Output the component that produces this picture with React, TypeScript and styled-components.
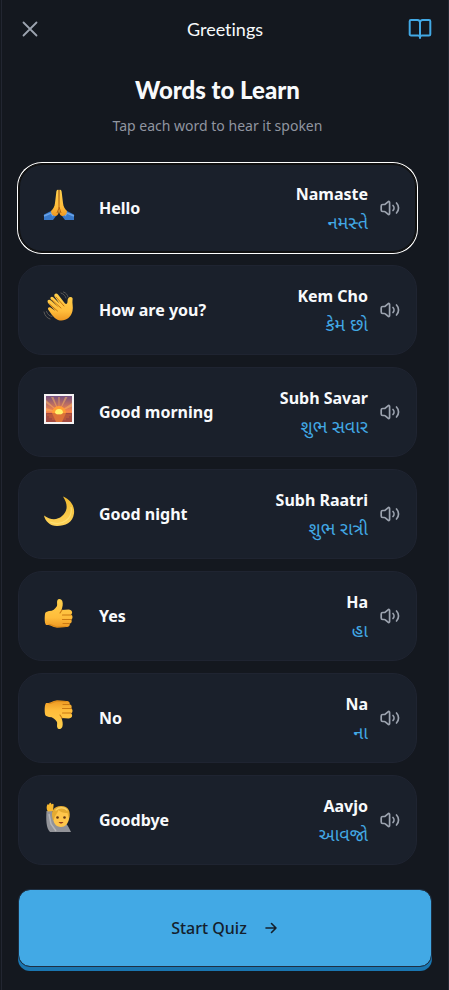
import React from "react";
import styled, { createGlobalStyle, css } from "styled-components";

const GlobalStyle = createGlobalStyle`
  *, *::before, *::after { box-sizing: border-box; }
  body { margin: 0; background: #14181f; }
  button { font: inherit; color: inherit; cursor: pointer; }
`;

const Screen = styled.div`
  min-height: 100vh;
  display: flex;
  flex-direction: column;
  margin-left: 1px;
  border: solid #222631;
  border-width: 0 1px;
  background: #14181f;
  color: #f8fafc;
  font-family: "Noto Sans", "Open Sans", "Noto Sans Gujarati", sans-serif;
`;

const Header = styled.header`
  display: flex;
  align-items: center;
  justify-content: space-between;
  height: 58px;
  padding: 0 16px;
`;

const IconButton = styled.button<{ $accent?: boolean }>`
  display: grid;
  place-items: center;
  width: 24px;
  height: 24px;
  padding: 0;
  border: 0;
  background: none;
  color: ${(p) => (p.$accent ? "#42a9e5" : "#9ca3af")};
`;

const Title = styled.h1`
  margin: 0;
  font: 400 18px/28px Lato, sans-serif;
  font-variant-ligatures: none;
`;

const Content = styled.main`
  flex: 1;
  padding: 16px 31px 0 16px;
`;

const Heading = styled.h2`
  margin: 0;
  text-align: center;
  font: 900 24px/32px Lato, sans-serif;
`;

const Subtitle = styled.p`
  margin: 8px 0 25px;
  text-align: center;
  font-size: 14px;
  line-height: 24px;
  color: #9095a0;
`;

const WordList = styled.ul`
  display: flex;
  flex-direction: column;
  gap: 12px;
  margin: 0;
  padding: 0;
  list-style: none;
`;

const WordCard = styled.button<{ $active?: boolean }>`
  display: flex;
  align-items: center;
  width: 100%;
  padding: 16px;
  border: 1px solid #1f2431;
  border-radius: 24px;
  background: #1a202b;
  text-align: left;
  outline: none;
  ${(p) =>
    p.$active &&
    css`
      border-color: #101010;
      box-shadow: inset 0 0 0 1px #101010, 0 0 0 1px #ffffff;
    `}
`;

const Picture = styled.svg`
  flex: none;
  width: 32px;
  height: 32px;
  margin: 0 24px 6px 8px;
  overflow: visible;
`;

const English = styled.span`
  flex: 1;
  font-size: 16px;
  font-weight: 700;
  line-height: 28px;
`;

const Translation = styled.span`
  display: flex;
  flex-direction: column;
  align-items: flex-end;
  font-size: 16px;
  line-height: 28px;
`;

const Latin = styled.span`
  font-weight: 700;
`;

const Native = styled.span`
  font-size: 18px;
  color: #42a9e5;
`;

const Speaker = styled.svg`
  flex: none;
  width: 20px;
  height: 20px;
  margin-left: 12px;
  color: #9ca3af;
`;

const Footer = styled.footer`
  padding: 24px 16px;
`;

const StartButton = styled.button`
  display: flex;
  align-items: center;
  justify-content: center;
  gap: 16px;
  width: 100%;
  height: 78px;
  border: 1px solid #1e3044;
  border-radius: 12px;
  background: #42a9e5;
  background-clip: padding-box;
  box-shadow: 0 4px 0 #1a76b1;
  color: #14202c;
  font-size: 16px;
  font-weight: 500;
  line-height: 28px;
`;

type EmojiName = "pray" | "wave" | "sunrise" | "moon" | "up" | "down" | "person";

const Thumb = () => (
  <>
    <path d="M2 17c0-2 2-2.500 4-3 4 0 6-2 8-5 .5-2-.5-4 .5-6 1-2 4-1 4.800 1 1 3 .2 6-.8 9l7-.5c4 0 4.500 4 2.500 5 2 1 2 4 .3 5 1 2 .2 4-1.800 4 1 2-1 3.500-3 3.500l-9 .5c-4 0-6-2-9-2.500H3c-1.500-2-1.500-7-1-11z" fill="url(#skin)" />
    <path d="M28 18h-8.500M28 22.500h-8.500M26 26.500h-6M19 13l-2 3" fill="none" stroke="#c97813" strokeWidth="1.1" strokeLinecap="round" />
    <path d="M6 27.500c3 0 5 2 8 2.500l9-.5" fill="none" stroke="#dc8b19" strokeWidth="1.1" strokeLinecap="round" />
  </>
);

const drawings: Record<EmojiName, React.ReactNode> = {
  pray: (
    <>
      <path d="M1 25.500l7-3.500 5 5-3 4H1zM31 25.500L24 22l-5 5 3 4h9z" fill="#3979c9" />
      <path d="M1 27l7-3 2 3M31 27l-7-3-2 3" fill="none" stroke="#6ba3e7" strokeWidth="1.4" />
      <path d="M15.800 1c-2-1-2.500 1-2.600 3L12 14c-.4 4-2 6-4 8 0 3 2 5 5 5 3-1 3-5 3-9z" fill="url(#skin)" />
      <path d="M16.200 1c2-1 2.500 1 2.600 3L20 14c.4 4 2 6 4 8 0 3-2 5-5 5-3-1-3-5-3-9z" fill="url(#skin)" />
      <path d="M16 1v18l-2 5M16 18l2 6" fill="none" stroke="#b66312" strokeWidth="1" />
    </>
  ),
  wave: (
    <>
      <path d="M7.500 8c-.5-2 1.500-3 3-1.500l6 6-5-7c-1-3 2-4 3.500-2l7 9c1.500 1 2.500 0 2.500-2 0-3 1-4.500 3-4.500s2.500 1.500 2 3c-.5 3 1 7 0 11-1.500 7-8 11-14.500 9-2.500-1-4-3-6-5L5.500 19c-1.500-2 .5-3.500 2-2.500l5 3.500-7.500-8c-1.500-3 1-4 3-2.500l7.500 7z" fill="url(#skin)" />
      <path d="M9 9l9 8M6.500 13l8 7M13 6l8 9" fill="none" stroke="#c77510" strokeWidth="1" strokeLinecap="round" />
      <path d="M18 2c3 1 4.500 3 5 5M20.500 1c3 1 4 3 4.500 5M3.500 20.500c1 3 3 4.500 5.500 5M1 21c1 4 3 6 6 7" fill="none" stroke="#5a5856" strokeWidth="1" strokeLinecap="round" />
    </>
  ),
  sunrise: (
    <>
      <path d="M1 1h30v30H1z" fill="#f6f3f3" />
      <path d="M3 3h26v26H3z" fill="url(#sky)" />
      <path d="M16 19L3 7v3zM16 19L8 4h2.500zM16 19l-.8-15h1.600zM16 19l6-15h2.500zM16 19l13-9v3.500zM16 19L3 15v3z" fill="#ffba5b" opacity=".5" />
      <path d="M3 20h26v9H3z" fill="#a54b40" />
      <path d="M9 20h14l-4 9h-6z" fill="#dc7438" />
      <path d="M9 20a7 7 0 0114 0z" fill="#ff9d35" />
      <path d="M12 20a4 4 0 018 0l-2 1.500h-4z" fill="#fff36c" />
      <path d="M4 22h24M6 24h20M9 26h14" stroke="#e17337" strokeWidth=".7" />
    </>
  ),
  moon: (
    <>
      <path d="M20 1.500c7 3 12 9 11 17-1 9-9 12.500-17 12.500C7 31 2 26 1 20.500c6 4.500 13 5 18 .5 6-5 6-12 1-19.500z" fill="url(#gold)" />
      <path d="M28 12c2 11-8 20-21 15" fill="none" stroke="#ffe77e" strokeWidth="1.2" opacity=".7" />
    </>
  ),
  up: <Thumb />,
  down: (
    <g transform="matrix(1 0 0 -1 0 32)">
      <Thumb />
    </g>
  ),
  person: (
    <>
      <path d="M3.500 10h6l2 10c6 2 11 0 14 6l2.500 5H7C3 27 3 18 3.500 10z" fill="#929398" />
      <path d="M6 13l2 10 5 7" fill="none" stroke="#b5b5b8" strokeWidth="1.5" />
      <path d="M5 10.500C3 8 3.500 4 5 3l1 1c.3-3 2-3 2.500-.5C10 2 11 3 10.500 5l-.5 5z" fill="#f7b82f" />
      <path d="M18 6c7 0 9 5 8 12-1 5-4 8-8 8-5 0-8-4-8-10 0-7 3-10 8-10z" fill="#ffc64b" />
      <path d="M10 19C7 10 11 5 18 5c8 0 10 6 8 13l-1.500-6c-5 0-7-1-9-3-1 4-4 5-4.500 10z" fill="#e4aa31" />
      <path d="M13 9c3-3 8-3 11 0" fill="none" stroke="#f8cf63" strokeWidth="1.4" strokeLinecap="round" />
      <circle cx="14.500" cy="16.500" r="1.300" fill="#633716" />
      <circle cx="21.500" cy="16.500" r="1.300" fill="#633716" />
      <path d="M15.500 21c2 2 3 2 5 0z" fill="#923b1d" />
    </>
  ),
};

const Gradients = () => (
  <svg width="0" height="0" aria-hidden="true" display="block">
    <defs>
      <linearGradient id="skin" x1="0" y1="0" x2="0" y2="1">
        <stop stopColor="#ffd04c" />
        <stop offset=".65" stopColor="#ffbd3b" />
        <stop offset="1" stopColor="#ed9722" />
      </linearGradient>
      <linearGradient id="sky" x1="0" y1="0" x2="0" y2="1">
        <stop stopColor="#745181" />
        <stop offset=".6" stopColor="#fa8649" />
        <stop offset="1" stopColor="#a24644" />
      </linearGradient>
      <linearGradient id="gold" x1="0" y1="0" x2="0" y2="1">
        <stop stopColor="#eeb82d" />
        <stop offset="1" stopColor="#ffd45b" />
      </linearGradient>
    </defs>
  </svg>
);

const words: { emoji: EmojiName; english: string; latin: string; native: string }[] = [
  { emoji: "pray", english: "Hello", latin: "Namaste", native: "નમસ્તે" },
  { emoji: "wave", english: "How are you?", latin: "Kem Cho", native: "કેમ છો" },
  { emoji: "sunrise", english: "Good morning", latin: "Subh Savar", native: "શુભ સવાર" },
  { emoji: "moon", english: "Good night", latin: "Subh Raatri", native: "શુભ રાત્રી" },
  { emoji: "up", english: "Yes", latin: "Ha", native: "હા" },
  { emoji: "down", english: "No", latin: "Na", native: "ના" },
  { emoji: "person", english: "Goodbye", latin: "Aavjo", native: "આવજો" },
];

export default function App() {
  const [active, setActive] = React.useState(0);
  return (
    <Screen>
      <GlobalStyle />
      <Gradients />
      <Header>
        <IconButton aria-label="Close">
          <svg width="24" height="24" viewBox="0 0 24 24" fill="none" stroke="currentColor" strokeWidth="1.8" strokeLinecap="round">
            <path d="M5.500 5.500l13 13M18.500 5.500l-13 13" />
          </svg>
        </IconButton>
        <Title>Greetings</Title>
        <IconButton aria-label="Dictionary" $accent>
          <svg width="24" height="24" viewBox="0 0 24 24" fill="none" stroke="currentColor" strokeWidth="2" strokeLinecap="round" strokeLinejoin="round">
            <path d="M12 5.500A2.500 2.500 0 009.500 3H3a1.300 1.300 0 00-1.300 1.300v12.900A1.300 1.300 0 003 18.500h7a2 2 0 012 2 2 2 0 012-2h7a1.300 1.300 0 001.300-1.300V4.300A1.300 1.300 0 0021 3h-6.500A2.500 2.500 0 0012 5.500V21" />
          </svg>
        </IconButton>
      </Header>
      <Content>
        <Heading>Words to Learn</Heading>
        <Subtitle>Tap each word to hear it spoken</Subtitle>
        <WordList>
          {words.map((w, i) => (
            <li key={w.english}>
              <WordCard $active={i === active} onClick={() => setActive(i)}>
                <Picture viewBox="0 0 32 32" aria-hidden="true">{drawings[w.emoji]}</Picture>
                <English>{w.english}</English>
                <Translation>
                  <Latin>{w.latin}</Latin>
                  <Native lang="gu">{w.native}</Native>
                </Translation>
                <Speaker viewBox="0 0 20 20" fill="none" stroke="currentColor" strokeWidth="1.7" strokeLinecap="round" strokeLinejoin="round" aria-hidden="true">
                  <path d="M1.200 8v4c0 .9.6 1.500 1.500 1.500h1.600c.4 0 .7.1 1 .4L8 16.200c.8.7 1.600.3 1.600-.7v-11c0-1-.8-1.400-1.600-.7L5.300 6.100c-.3.3-.6.4-1 .4H2.700c-.9 0-1.500.6-1.500 1.500zM13 7.500c1.300 1.300 1.300 3.700 0 5M16.500 5c2.700 2.700 2.700 7.300 0 10" />
                </Speaker>
              </WordCard>
            </li>
          ))}
        </WordList>
      </Content>
      <Footer>
        <StartButton>
          Start Quiz
          <svg width="16" height="16" viewBox="0 0 16 16" fill="none" stroke="currentColor" strokeWidth="1.6" strokeLinecap="round" strokeLinejoin="round" aria-hidden="true">
            <path d="M3 8h10M8.500 3.500L13 8l-4.500 4.500" />
          </svg>
        </StartButton>
      </Footer>
    </Screen>
  );
}
